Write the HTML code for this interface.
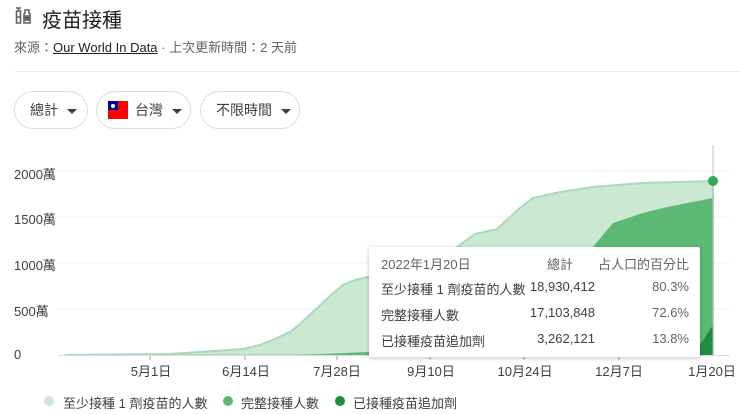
<!DOCTYPE html>
<html><head><meta charset="utf-8"><style>
body{margin:0;width:740px;height:414px;background:#fff;font-family:"Liberation Sans","Noto Sans CJK TC",sans-serif;color:#202124;overflow:hidden;position:relative}
.a{position:absolute;white-space:nowrap}
.btn{position:absolute;top:91px;height:38px;border:1px solid #dadce0;border-radius:20px;box-sizing:border-box;font-size:14px;color:#3c4043;line-height:36px;white-space:nowrap}
.tri{display:inline-block;width:0;height:0;border-left:5px solid transparent;border-right:5px solid transparent;border-top:5px solid #3c4043;vertical-align:middle;margin-left:9px}
.yl{position:absolute;left:14px;font-size:13px;color:#3c4043;white-space:nowrap}
.xl{position:absolute;top:361px;font-size:13px;color:#3c4043;transform:translateX(-50%);white-space:nowrap}
.tt{font-size:13px;color:#3c4043}
</style></head><body>
<svg class="a" style="left:14px;top:7px" width="18" height="18" viewBox="0 0 18 18" fill="none" stroke="#5f6368" stroke-width="1.6"><path d="M2 1h5M4.5 1v3M2.5 4h4v12h-4zM2.5 10h4"/><path d="M11 3h4v3l1 1v9h-6V7l1-1z"/><rect x="11.5" y="9" width="3" height="4" fill="#5f6368"/></svg>
<div class="a" style="left:42px;top:4px;font-size:20px;color:#202124">疫苗接種</div>
<div class="a" style="left:14px;top:37px;font-size:13px;color:#5f6368">來源：<span style="color:#202124;text-decoration:underline">Our World In Data</span> · 上次更新時間：2 天前</div>
<div class="a" style="left:15px;top:71px;width:725px;height:1px;background:#ebebeb"></div>
<div class="btn" style="left:14px;width:74px;padding-left:15px">總計<span class="tri"></span></div>
<div class="btn" style="left:96px;width:95px;padding-left:11px"><span style="display:inline-block;width:20px;height:18px;background:#fe0000;vertical-align:middle;position:relative;margin-right:7px;top:-1px"><span style="position:absolute;left:0;top:0;width:10px;height:9px;background:#000095"></span><span style="position:absolute;left:3px;top:2.5px;width:4px;height:4px;background:#fff;border-radius:50%"></span></span>台灣<span class="tri"></span></div>
<div class="btn" style="left:200px;width:100px;padding-left:15px">不限時間<span class="tri"></span></div>

<div class="yl" style="top:164px">2000萬</div>
<div class="yl" style="top:209px">1500萬</div>
<div class="yl" style="top:255px">1000萬</div>
<div class="yl" style="top:301px">500萬</div>
<div class="yl" style="top:347px">0</div>
<svg class="a" style="left:0;top:0" width="740" height="414">
<g stroke="#efefef" stroke-width="1"><line x1="58" y1="171" x2="730" y2="171"/><line x1="58" y1="217" x2="730" y2="217"/><line x1="58" y1="263" x2="730" y2="263"/><line x1="58" y1="309" x2="730" y2="309"/></g>
<path d="M65 355L170 354L243 349L260 345L275 339L290 332L300 324L315 310L330 296L343 285L355 280L368 277L380 273L440 262L457 247L475 234L497 229L520 208L533 198L560 192L593 187L643 183L713 181L713 355Z" fill="#cbe8d3" stroke="#a8dab5" stroke-width="2"/>
<path d="M300 355L368 352L560 345L590 330L593 247L613 223L643 213L667 207L713 198L713 355Z" fill="#5bb974"/>
<path d="M690 355L700 345L713 325L713 355Z" fill="#1e8e3e"/>
<line x1="58" y1="355.5" x2="730" y2="355.5" stroke="#dadce0"/>
<g stroke="#9aa0a6"><line x1="150" y1="356" x2="150" y2="360"/><line x1="245" y1="356" x2="245" y2="360"/><line x1="337" y1="356" x2="337" y2="360"/><line x1="430" y1="356" x2="430" y2="360"/><line x1="524" y1="356" x2="524" y2="360"/><line x1="619" y1="356" x2="619" y2="360"/></g>
<line x1="713" y1="145" x2="713" y2="356" stroke="#bdc1c6"/>
<circle cx="713" cy="181" r="5" fill="#34a853"/>
<circle cx="49" cy="401" r="5" fill="#cbe8d3"/><circle cx="228" cy="401" r="5" fill="#5bb974"/><circle cx="340" cy="401" r="5" fill="#1e8e3e"/>
</svg>
<div class="xl" style="left:151px">5月1日</div>
<div class="xl" style="left:246px">6月14日</div>
<div class="xl" style="left:337px">7月28日</div>
<div class="xl" style="left:431px">9月10日</div>
<div class="xl" style="left:525px">10月24日</div>
<div class="xl" style="left:619px">12月7日</div>
<div class="xl" style="left:712px">1月20日</div>
<div class="a" style="left:63px;top:393px;font-size:13px;color:#3c4043">至少接種 1 劑疫苗的人數</div>
<div class="a" style="left:241px;top:393px;font-size:13px;color:#3c4043">完整接種人數</div>
<div class="a" style="left:353px;top:393px;font-size:13px;color:#3c4043">已接種疫苗追加劑</div>

<div class="a" style="left:369px;top:247px;width:331px;height:110px;background:#fff;box-shadow:0 1px 4px rgba(0,0,0,.25);border-radius:2px">
<div class="a tt" style="left:12px;top:7px;color:#5f6368">2022年1月20日</div>
<div class="a tt" style="right:127px;top:7px;color:#5f6368">總計</div>
<div class="a tt" style="right:11px;top:7px;color:#5f6368">占人口的百分比</div>
<div class="a tt" style="left:12px;top:32px">至少接種 1 劑疫苗的人數</div>
<div class="a tt" style="right:105px;top:32px">18,930,412</div>
<div class="a tt" style="right:11px;top:32px;color:#5f6368">80.3%</div>
<div class="a tt" style="left:12px;top:58px">完整接種人數</div>
<div class="a tt" style="right:105px;top:58px">17,103,848</div>
<div class="a tt" style="right:11px;top:58px;color:#5f6368">72.6%</div>
<div class="a tt" style="left:12px;top:84px">已接種疫苗追加劑</div>
<div class="a tt" style="right:105px;top:84px">3,262,121</div>
<div class="a tt" style="right:11px;top:84px;color:#5f6368">13.8%</div>
</div>
</body></html>
